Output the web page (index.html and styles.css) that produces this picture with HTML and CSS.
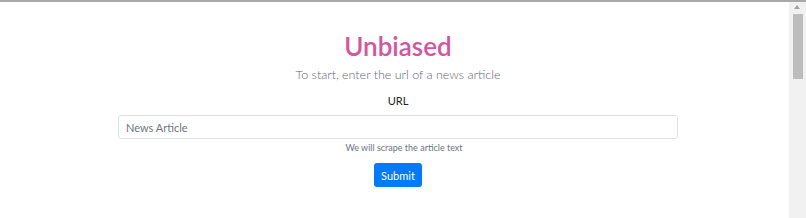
FILE: index.html
```html
<!DOCTYPE html>
<html lang="en">
<head>
    <meta charset="UTF-8">
    <meta name="viewport" content="width=device-width, initial-scale=1.0">
    <title>Unbiased</title>
    <link rel="stylesheet" href="styles.css">
</head>
<body>
    <div class="page">
        <main class="content">
            <h1 class="title">Unbiased</h1>
            <p class="lead">To start, enter the url of a news article</p>
            <form class="url-form">
                <label for="url">URL</label>
                <input type="text" id="url" class="form-control" placeholder="News Article">
                <small class="help">We will scrape the article text</small>
                <button type="submit" class="btn">Submit</button>
            </form>
        </main>
        <div class="scrollbar">
            <div class="arrow"></div>
            <div class="thumb"></div>
        </div>
    </div>
</body>
</html>
```

FILE: styles.css
```css
html, body {
    margin: 0;
    height: 100%;
    overflow: hidden;
}
body {
    font-family: Lato, "Open Sans", Arial, sans-serif;
    color: #212529;
    background: #fff;
    border-top: 2px solid #a9a9a9;
    box-sizing: border-box;
}
.page {
    display: flex;
    height: 100%;
}
.content {
    flex: 1;
    display: flex;
    flex-direction: column;
    align-items: center;
    padding-left: 7px;
}
.title {
    margin: 28px 0 0;
    font-size: 26px;
    font-weight: 600;
    line-height: 32px;
    color: #d4559e;
}
.lead {
    margin: 3px 0 0;
    font-size: 12.5px;
    font-weight: 300;
    line-height: 20px;
    color: #5f666d;
}
.url-form {
    display: flex;
    flex-direction: column;
    align-items: center;
    margin-top: 8px;
}
.url-form label {
    font-size: 11px;
    line-height: 16px;
}
.form-control {
    box-sizing: border-box;
    width: 560px;
    height: 24px;
    margin-top: 6px;
    padding: 0 7px;
    font-family: inherit;
    font-size: 11px;
    color: #495057;
    border: 1px solid #dfe2e6;
    border-radius: 3px;
    outline: none;
}
.form-control::placeholder {
    color: #6c757d;
}
.help {
    margin: 2px 0 0 12px;
    font-size: 9px;
    line-height: 13px;
    color: #6c757d;
}
.btn {
    margin-top: 9px;
    height: 24px;
    width: 48px;
    padding: 0;
    font-family: inherit;
    font-size: 11px;
    color: #fff;
    background: #007bff;
    border: none;
    border-radius: 3px;
}
.scrollbar {
    width: 17px;
    background: #f1f1f1;
    display: flex;
    flex-direction: column;
    align-items: center;
}
.arrow {
    height: 10px;
    width: 17px;
    background: #f1f1f1;
    position: relative;
}
.arrow::after {
    content: "";
    position: absolute;
    left: 5px;
    top: 3px;
    border-left: 3px solid transparent;
    border-right: 3px solid transparent;
    border-bottom: 4px solid #a3a3a3;
}
.thumb {
    width: 10px;
    height: 65px;
    margin-top: 2px;
    background: #bdbdbd;
}
```
